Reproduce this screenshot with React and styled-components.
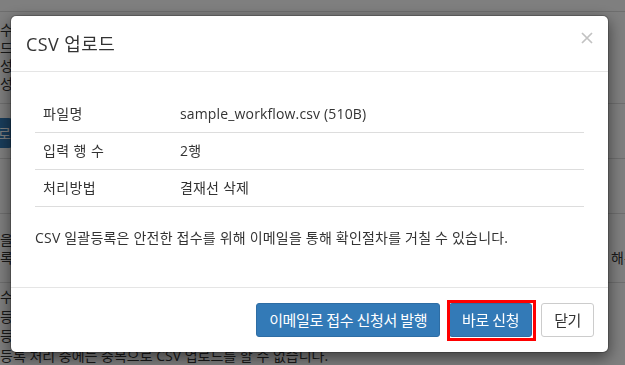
import React from "react";
import styled, { createGlobalStyle } from "styled-components";

const GlobalStyle = createGlobalStyle`
  html, body {
    margin: 0;
    padding: 0;
    overflow: hidden;
    background: #fff;
  }
  body {
    font-family: "Open Sans", "Noto Sans CJK KR", sans-serif;
    font-size: 14px;
    color: #333;
  }
  * {
    box-sizing: border-box;
  }
`;

const rows = [
  { label: "파일명", value: "sample_workflow.csv (510B)" },
  { label: "입력 행 수", value: "2행" },
  { label: "처리방법", value: "결재선 삭제" },
];

const App = () => {
  return (
    <>
      <GlobalStyle />
      <Page>
        <TopBar />
        <PageRow height="92px" pad="9px">
          <PageText>수정하려면 아래 내용을 확인하세요.</PageText>
          <PageText>드는 항목은 자동으로 반영됩니다.</PageText>
          <PageText>성명과 이메일을 입력하세요.</PageText>
          <PageText>성공한 건만 등록됩니다.</PageText>
        </PageRow>
        <PageRow height="55px" pad="14px">
          <PageButton>로</PageButton>
        </PageRow>
        <PageRow height="55px" pad="0" />
        <PageRow height="69px" pad="17px">
          <PageText>을 올려주세요.</PageText>
          <SplitLine>
            <PageText>록</PageText>
            <PageText>해주세요</PageText>
          </SplitLine>
        </PageRow>
        <PageRow height="90px" pad="4px" last>
          <PageText tall>수신 확인 후 처리됩니다.</PageText>
          <PageText tall>등록된 결재선만 삭제됩니다.</PageText>
          <PageText tall>등록 결과는 메일로 안내됩니다.</PageText>
          <PageText tall>등록 처리 중에는 중복으로 CSV 업로드를 할 수 없습니다.</PageText>
        </PageRow>
      </Page>

      <Backdrop />

      <Dialog>
        <Header>
          <Title>CSV 업로드</Title>
          <CloseIcon aria-label="close">
            <svg width="12" height="12" viewBox="0 0 12 12">
              <path d="M1 1 L11 11 M11 1 L1 11" stroke="#c2c2c2" strokeWidth="1.7" fill="none" />
            </svg>
          </CloseIcon>
        </Header>
        <Body>
          <InfoTable>
            <tbody>
              {rows.map((r) => (
                <tr key={r.label}>
                  <LabelCell>{r.label}</LabelCell>
                  <ValueCell>{r.value}</ValueCell>
                </tr>
              ))}
            </tbody>
          </InfoTable>
          <Notice>CSV 일괄등록은 안전한 접수를 위해 이메일을 통해 확인절차를 거칠 수 있습니다.</Notice>
        </Body>
        <Footer>
          <Button variant="primary">이메일로 접수 신청서 발행</Button>
          <Button variant="primary" highlight>바로 신청</Button>
          <Button>닫기</Button>
        </Footer>
      </Dialog>
    </>
  );
};

export default App;

const Page = styled.div`
  width: 625px;
  height: 365px;
  overflow: hidden;
  display: flex;
  flex-direction: column;
`;

const TopBar = styled.div`
  flex: 0 0 12px;
  border-bottom: 1px solid #ddd;
`;

const PageRow = styled.div`
  flex: 0 0 ${(p) => p.height};
  padding-top: ${(p) => p.pad};
  border-bottom: ${(p) => (p.last ? "none" : "1px solid #ddd")};
  display: flex;
  flex-direction: column;
`;

const PageText = styled.div`
  font-size: 14px;
  line-height: ${(p) => (p.tall ? "19.5px" : "18px")};
  color: #333;
  white-space: nowrap;
`;

const SplitLine = styled.div`
  display: grid;
  grid-template-columns: 611px 1fr;
`;

const PageButton = styled.div`
  width: 120px;
  height: 30px;
  margin-left: -108px;
  background: #337ab7;
  color: #fff;
  display: flex;
  align-items: center;
  justify-content: flex-end;
  padding-right: 1px;
  border-radius: 3px;
`;

const Backdrop = styled.div`
  position: fixed;
  inset: 0;
  background: rgba(0, 0, 0, 0.5);
`;

const Dialog = styled.div`
  position: fixed;
  top: 15px;
  left: 10px;
  width: 599px;
  background: #fff;
  border: 1px solid rgba(0, 0, 0, 0.2);
  border-radius: 6px;
  box-shadow: 0 5px 15px rgba(0, 0, 0, 0.5);
  background-clip: padding-box;
`;

const Header = styled.div`
  height: 56px;
  padding: 0 15px;
  border-bottom: 1px solid #e5e5e5;
  display: flex;
  align-items: center;
  justify-content: space-between;
`;

const Title = styled.h4`
  margin: 0;
  font-size: 18px;
  font-weight: 400;
  line-height: 26px;
  color: #333;
  letter-spacing: 0.4px;
`;

const CloseIcon = styled.span`
  display: flex;
  width: 12px;
  height: 12px;
  margin-right: 0;
  margin-top: -11px;
`;

const Body = styled.div`
  padding: 24px 24px 39px;
`;

const InfoTable = styled.table`
  width: 100%;
  border-collapse: collapse;
  margin-bottom: 21px;
`;

const LabelCell = styled.td`
  width: 137px;
  padding: 8px;
  line-height: 20px;
  border-bottom: 1px solid #ddd;
  color: #333;
  letter-spacing: 0.4px;
`;

const ValueCell = styled.td`
  padding: 8px;
  line-height: 20px;
  border-bottom: 1px solid #ddd;
  color: #333;
  letter-spacing: 0.15px;
`;

const Notice = styled.p`
  margin: 0;
  line-height: 20px;
  color: #333;
  letter-spacing: 0.2px;
`;

const Footer = styled.div`
  padding: 15px 14px 15px 15px;
  border-top: 1px solid #e5e5e5;
  display: flex;
  justify-content: flex-end;
  gap: 9px;
`;

const Button = styled.button`
  position: relative;
  height: 34px;
  padding: 6px 12px;
  font-family: "Open Sans", "Noto Sans CJK KR", sans-serif;
  font-size: 15px;
  line-height: 20px;
  letter-spacing: -0.4px;
  border-radius: 3px;
  border: 1px solid ${(p) => (p.variant === "primary" ? "#2e6da4" : "#ccc")};
  background: ${(p) => (p.variant === "primary" ? "#337ab7" : "#fff")};
  color: ${(p) => (p.variant === "primary" ? "#fff" : "#333")};
  cursor: pointer;

  &::after {
    content: "";
    display: ${(p) => (p.highlight ? "block" : "none")};
    position: absolute;
    top: -4px;
    left: -3px;
    right: -5px;
    bottom: -5px;
    border: 3px solid #ff0000;
  }
`;
